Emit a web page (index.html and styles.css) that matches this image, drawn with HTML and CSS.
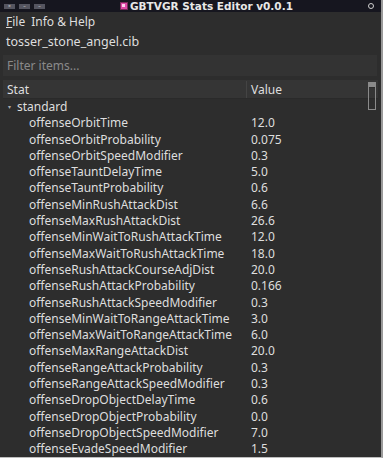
FILE: index.html
```html
<!DOCTYPE html>
<html lang="en">
<head>
    <meta charset="UTF-8">
    <title>GBTVGR Stats Editor v0.0.1</title>
    <link rel="stylesheet" href="styles.css">
</head>
<body>
    <div class="window">
        <div class="titlebar">
            <div class="win-buttons">
                <span class="win-btn">&times;</span>
                <span class="win-btn">&ndash;</span>
                <span class="win-btn">&ndash;</span>
            </div>
            <div class="title">
                <svg class="app-icon" width="8" height="8" viewBox="0 0 8 8">
                    <rect x="0" y="0" width="8" height="8" fill="#7a2a5a"/>
                    <rect x="1" y="1" width="6" height="6" fill="#e04aa8"/>
                    <rect x="2" y="2" width="3" height="3" fill="#ffd0ee"/>
                </svg>
                GBTVGR Stats Editor v0.0.1
            </div>
            <span class="pin"></span>
        </div>

        <div class="menubar">
            <span class="menu-item"><u>F</u>ile</span>
            <span class="menu-item">Info &amp; Help</span>
        </div>

        <div class="filename">tosser_stone_angel.cib</div>

        <div class="filter">
            <input type="text" placeholder="Filter items...">
        </div>

        <div class="tree">
            <div class="tree-header">
                <div class="col-stat">Stat</div>
                <div class="col-value">Value</div>
            </div>
            <div class="scrollbar"><span class="scroll-arrow"></span><span class="scroll-thumb"></span></div>

            <div class="group">
                <span class="arrow">&#9662;</span>standard
            </div>
            <div id="rows"></div>
        </div>
    </div>

    <script>
        const stats = [
            ['offenseOrbitTime', '12.0'],
            ['offenseOrbitProbability', '0.075'],
            ['offenseOrbitSpeedModifier', '0.3'],
            ['offenseTauntDelayTime', '5.0'],
            ['offenseTauntProbability', '0.6'],
            ['offenseMinRushAttackDist', '6.6'],
            ['offenseMaxRushAttackDist', '26.6'],
            ['offenseMinWaitToRushAttackTime', '12.0'],
            ['offenseMaxWaitToRushAttackTime', '18.0'],
            ['offenseRushAttackCourseAdjDist', '20.0'],
            ['offenseRushAttackProbability', '0.166'],
            ['offenseRushAttackSpeedModifier', '0.3'],
            ['offenseMinWaitToRangeAttackTime', '3.0'],
            ['offenseMaxWaitToRangeAttackTime', '6.0'],
            ['offenseMaxRangeAttackDist', '20.0'],
            ['offenseRangeAttackProbability', '0.3'],
            ['offenseRangeAttackSpeedModifier', '0.3'],
            ['offenseDropObjectDelayTime', '0.6'],
            ['offenseDropObjectProbability', '0.0'],
            ['offenseDropObjectSpeedModifier', '7.0'],
            ['offenseEvadeSpeedModifier', '1.5']
        ];

        const rowsDiv = document.getElementById('rows');
        stats.forEach(([name, value]) => {
            const row = document.createElement('div');
            row.className = 'row';
            row.innerHTML = `<div class="col-stat">${name}</div><div class="col-value">${value}</div>`;
            rowsDiv.appendChild(row);
        });
    </script>
</body>
</html>
```

FILE: styles.css
```css
:root {
    --title-bg: #16161f;
    --window-bg: #2d2d2d;
    --header-bg: #353535;
    --input-bg: #333333;
    --text-primary: #dedede;
    --text-muted: #8a8a8a;
    --border-color: #454545;
}

body {
    margin: 0;
    background: #ffffff;
    font-family: 'Noto Sans', 'Open Sans', sans-serif;
    font-size: 12px;
    color: var(--text-primary);
}

.window {
    width: 381px;
    height: 457px;
    background: var(--window-bg);
    border-right: 2px solid #9a9a9a;
    border-bottom: 1px solid #bdbdbd;
    overflow: hidden;
    display: flex;
    flex-direction: column;
}

.titlebar {
    height: 14px;
    background: var(--title-bg);
    display: flex;
    align-items: center;
}

.win-buttons {
    display: flex;
    gap: 4px;
    padding-left: 4px;
}

.win-btn {
    width: 11px;
    height: 5px;
    background: #555560;
    color: #cfcfcf;
    font-size: 5px;
    line-height: 5px;
    text-align: center;
}

.title {
    flex: 1;
    display: flex;
    align-items: center;
    gap: 1px;
    padding-left: 75px;
    font-family: 'DejaVu Sans', sans-serif;
    font-weight: bold;
    font-size: 10.5px;
    color: #e8e8e8;
}

.app-icon {
    margin-right: 1px;
}

.pin {
    width: 4px;
    height: 4px;
    border: 1px solid #cfcfcf;
    border-radius: 50%;
    margin-right: 7px;
}

.menubar {
    height: 21px;
    display: flex;
    align-items: center;
    gap: 6px;
    padding-left: 6px;
    padding-top: 1px;
    font-size: 12px;
}

.menu-item u {
    text-decoration-thickness: 1px;
}

.filename {
    height: 23px;
    line-height: 24px;
    padding-left: 6px;
    font-size: 12.5px;
}

.filter {
    padding: 2px 4px 0 3px;
}

.filter input {
    box-sizing: border-box;
    width: 100%;
    height: 21px;
    background: var(--input-bg);
    border: none;
    padding: 0 4px;
    font-family: inherit;
    font-size: 12px;
    color: var(--text-primary);
}

.filter input::placeholder {
    color: var(--text-muted);
}

.tree {
    position: relative;
    margin: 4px 3px 0 3px;
    flex: 1;
}

.tree-header {
    display: flex;
    height: 18px;
    align-items: center;
    background: var(--header-bg);
    border-bottom: 1px solid #2a2a2a;
}

.tree-header .col-stat {
    border-right: 1px solid #444444;
}

.col-stat {
    width: 244px;
    padding-left: 4px;
    box-sizing: border-box;
}

.col-value {
    padding-left: 4px;
}

.scrollbar {
    position: absolute;
    top: 2px;
    right: 2px;
    width: 6px;
    height: 26px;
    border: 1px solid #8a8a8a;
    display: flex;
    flex-direction: column;
}

.scroll-arrow {
    height: 4px;
    background: #8a8a8a;
    border-bottom: 1px solid #2d2d2d;
}

.group {
    height: 16.3px;
    line-height: 16.3px;
    padding-left: 14px;
    position: relative;
    font-size: 12px;
}

.arrow {
    position: absolute;
    left: 5px;
    font-size: 6px;
    color: #aaaaaa;
}

.row {
    display: flex;
    height: 16.3px;
    line-height: 16.3px;
    font-size: 12px;
}

.row .col-stat {
    padding-left: 26px;
}
```
